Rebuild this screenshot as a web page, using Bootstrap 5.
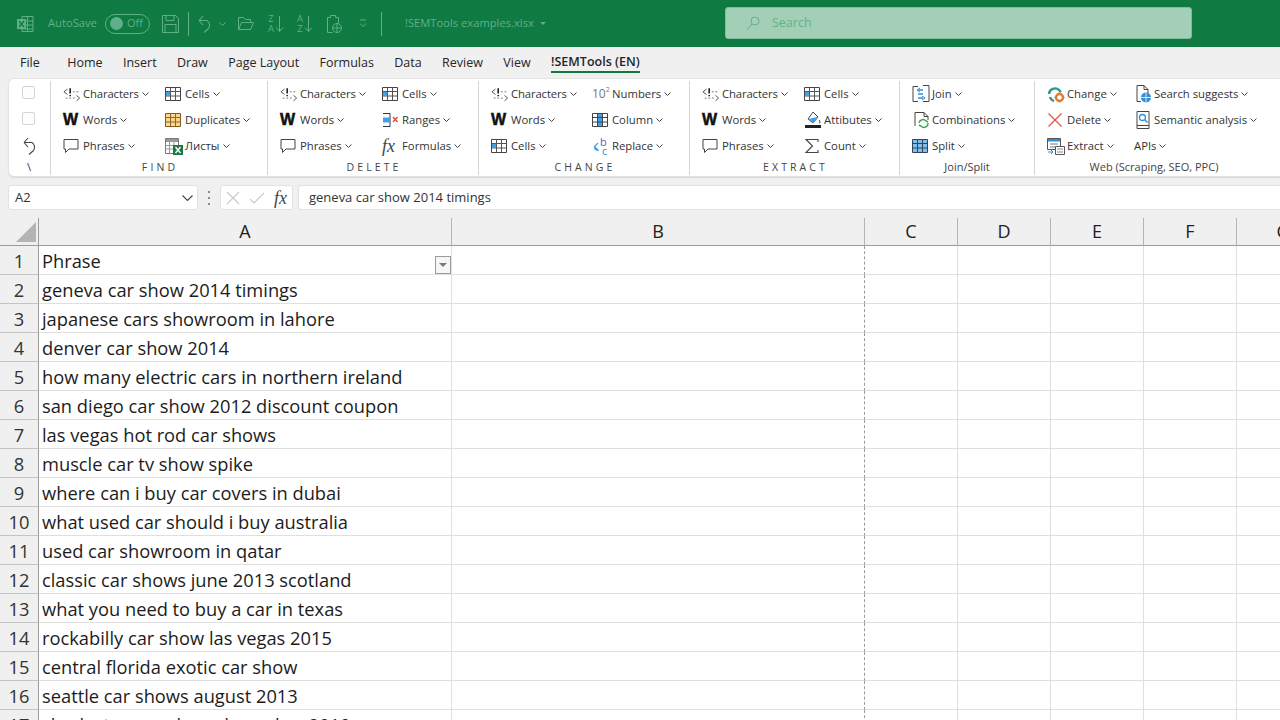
<!DOCTYPE html>
<html lang="en">
<head>
<meta charset="utf-8">
<title>!SEMTools examples.xlsx</title>
<link href="https://cdn.jsdelivr.net/npm/bootstrap@5.3.0/dist/css/bootstrap.min.css" rel="stylesheet">
<style>
html,body{height:720px;overflow:hidden;background:#fff;}
body{font-family:"Open Sans","Noto Sans",sans-serif;color:#222;}
.tbar{height:47px;background:#107a43;color:#5fb088;font-size:11.2px;}
.tb-ic{display:block;flex:none;}
.tb-auto{width:50px;margin-left:14px;white-space:nowrap;}
.tog{width:45px;height:20px;border:1px solid #5fb088;border-radius:10px;margin:0 12px 0 7px;padding:0 4px;font-size:11px;flex:none;}
.tog-dot{width:13px;height:13px;border-radius:50%;background:#5fb088;flex:none;}
.tb-sep{width:1px;height:24px;background:#5fb088;flex:none;}
.sort{width:17px;height:20px;flex:none;font-size:9.5px;line-height:10px;color:#5fb088;}
.sort-l{width:8px;text-align:center;}
.srch{width:467px;height:32px;margin-left:auto;margin-right:88px;margin-top:-1px;background:#a2cfb5;border:1px solid #7fbc9b;border-radius:3px;color:#6aaf8b;font-size:12.5px;padding-left:20px;}
.tabs{height:31px;background:#f0f0f0;font-size:12.5px;color:#262626;padding-left:20px;gap:20.4px;flex-wrap:nowrap;}
.tabs .nav-link{padding:0;color:#262626;line-height:31px;height:27px;white-space:nowrap;}
.tabs .first-tab{margin-right:7px;}
.tabs .nav-link.on{font-weight:600;border-bottom:2px solid #107a43;line-height:30px;height:26px;}
.rb-wrap{background:#f0f0f0;height:107px;padding-left:8px;}
.ribbon{height:99px;background:#fff;border:1px solid #e3e3e3;border-right:0;border-radius:6px 0 0 6px;box-shadow:0 1px 1px #d8d8d8;font-size:11.3px;color:#333;padding-top:2px;}
.grp{height:94px;border-right:1px solid #d6d6d6;flex:none;position:relative;}
.g0{width:42px;padding-left:12px;} .g1{width:217px;padding-left:12px;} .g2{width:211px;padding-left:12px;} .g3{width:211px;padding-left:12px;}
.g4{width:210px;padding-left:12px;} .g5{width:135px;padding-left:12px;} .g6{width:240px;padding-left:12px;border-right:0;}
.rcol{flex:none;}
.ritem{height:26px;white-space:nowrap;line-height:1;}
.ri{width:20px;flex:none;display:flex;align-items:center;}
.ri svg{display:block;}
.cv{margin-left:3px;flex:none;}
.tight{letter-spacing:-.12px;}
.w-ic{font-family:"Liberation Sans",sans-serif;font-weight:700;font-size:16px;color:#111;-webkit-text-stroke:.5px #111;}
.fx-ic{font-family:"Liberation Serif",serif;font-style:italic;font-size:18px;color:#444;}
.ten-ic{font-size:12px;color:#777;white-space:nowrap;}
.ten-ic sup{font-size:7px;top:-.6em;}
.glabel{position:absolute;left:2px;right:0;top:79px;text-align:center;font-size:11px;line-height:14px;color:#444;white-space:nowrap;}
.g5 .glabel{left:0;}
.g6 .glabel{left:-2px;}
.spaced{letter-spacing:3.1px;font-size:10.5px;}
.chk{width:13px;height:13px;border:1px solid #d5d5d5;border-radius:2px;background:#fdfdfd;margin-bottom:3px;}
.g0 .ritem{margin-left:1px;}
.undo-ic{color:#444;margin-left:1px;}
.slash{font-size:11px;line-height:12px;margin-left:6px;margin-top:2px;}
.fbar{background:#f0f0f0;height:33px;padding-left:8px;font-size:13px;color:#333;}
.fbox{height:25px;background:#fff;border:1px solid #e2e2e2;border-radius:3px;padding-top:1px;}
.namebox{width:190px;padding:1px 4px 0 6px;}
.dots{width:22px;height:25px;color:#888;}
.dots i{display:block;width:2px;height:2px;background:#8a8a8a;margin:2px 0;}
.fxbox{width:73px;padding:0 5px 0 5px;}
.fbox-in{margin-left:5px;flex:1;padding-left:10px;border-right:0;border-radius:3px 0 0 3px;}
.sheet{display:grid;grid-template-columns:39px 413px 413px 93px 93px 93px 93px 93px;grid-auto-rows:29px;width:1330px;}
.chd{height:28px;background:#f0f0f0;border-right:1px solid #b5b5b5;border-bottom:1px solid #9b9b9b;font-size:18px;color:#222;line-height:1;padding-bottom:2px;}
.corner{border-right:1px solid #9b9b9b;position:relative;}
.sheet-head{grid-auto-rows:28px;}
.corner-tri{left:16px;top:4px;}
.rhd{background:#f0f0f0;border-right:1px solid #9b9b9b;border-bottom:1px solid #c4c4c4;font-size:18.3px;color:#333;padding-top:1px;}
.cel{border-right:1px solid #dfdfdf;border-bottom:1px solid #dfdfdf;font-size:18.3px;color:#1c1c1c;padding:1px 0 0 3px;white-space:nowrap;overflow:hidden;}
.brk{border-right:1px dashed #9a9a9a;}
.flt{width:16px;height:18px;border:1px solid #9b9b9b;background:#f6f6f6;flex:none;margin-top:9px;}
.flt::after{content:"";border:4px solid transparent;border-top:4px solid #777;border-bottom:0;}
.rows{overflow:hidden;height:474px;}
</style>
</head>
<body>
<svg width="0" height="0" class="position-absolute">
<defs>
<symbol id="chars" viewBox="0 0 20 16"><path d="M5 2 1 5l4 3" fill="none" stroke="#555" stroke-width="1.1"/><path d="M8 1v6M8 8.500v1.500" stroke="#222" stroke-width="1.800"/><path d="M11 5h2M15 5h2M3 12h2M7 12h2M11 12h2" stroke="#777" stroke-width="1.100"/><path d="M15 9l3.500 3-3.500 3" fill="none" stroke="#555" stroke-width="1.100"/></symbol>
<symbol id="bubble" viewBox="0 0 16 16"><path d="M1 1.500h14v9.500H6L2.500 14.500V11H1z" fill="#fff" stroke="#444"/></symbol>
<symbol id="tbl" viewBox="0 0 16 16"><path d="M.5 1.500h15v13H.5z" fill="#fff" stroke="#444"/><path d="M1 5h4.500v4.500H1z" fill="#41a0e6"/><path d="M5.500 1.500v13M10.500 1.500v13M.5 5.500h15M.5 10h15" stroke="#555" fill="none"/></symbol>
<symbol id="dup" viewBox="0 0 16 16"><path d="M.5 1.500h15v13H.5z" fill="#fbd68b" stroke="#7a5c20"/><path d="M5.500 1.500v13M10.500 1.500v13M.5 5.500h15M.5 10h15" stroke="#8a6a2a" fill="none"/></symbol>
<symbol id="col" viewBox="0 0 16 16"><path d="M.5 1.500h15v13H.5z" fill="#fff" stroke="#444"/><path d="M5.500 2h5v12h-5z" fill="#41a0e6"/><path d="M5.500 1.500v13M10.500 1.500v13M.5 5.500h15M.5 10h15" stroke="#444" fill="none"/></symbol>
<symbol id="split" viewBox="0 0 16 16"><path d="M.5 1.500h15v13H.5z" fill="#7dc0f0" stroke="#345"/><path d="M5.500 1.500v13M10.500 1.500v13M.5 5.500h15M.5 10h15" stroke="#345" fill="none"/></symbol>
<symbol id="sheets" viewBox="0 0 18 18"><path d="M.5 1.500h13v15H.5z" fill="#fff" stroke="#777"/><path d="M1 2h12v3H1z" fill="#9a9a9a"/><path d="M.5 8.500h13M.5 12h13M4.500 5v11M9 5v11" stroke="#999" fill="none"/><path d="M8 8h10v10H8z" fill="#1b7a43"/><path d="M10.500 10l5 6M15.500 10l-5 6" stroke="#fff" stroke-width="1.400"/></symbol>
<symbol id="ranges" viewBox="0 0 18 16"><path d="M1 1.500h7v13H1" fill="none" stroke="#333"/><path d="M1 5.500h7v5H1z" fill="#41a0e6"/><path d="M11 5l4.500 5M15.500 5 11 10" stroke="#e03c31" stroke-width="1.200"/></symbol>
<symbol id="repl" viewBox="0 0 18 18"><path d="M6 6 2.500 9.500 6 13M2.500 9.500c0 3 2 4 4.500 4" fill="none" stroke="#41a0e6" stroke-width="1.200"/><text x="8" y="9" font-size="11" fill="#7a4fb5" font-family="Open Sans">b</text><text x="10" y="18" font-size="11" fill="#2f8fd8" font-family="Open Sans">c</text></symbol>
<symbol id="fill" viewBox="0 0 18 18"><path d="M9 1l5 5-5 6-5-4z" fill="#fff" stroke="#444"/><path d="M4 8l5 4 5-6z" fill="#41a0e6"/><path d="M15 9c1.500 2 1.500 3 0 3" stroke="#444" fill="none"/><path d="M1 14h16v3H1z" fill="#222"/></symbol>
<symbol id="sigma" viewBox="0 0 16 16"><path d="M14 4V1.500H2L8.500 8 2 14.500h12V12" fill="none" stroke="#444" stroke-width="1.100"/></symbol>
<symbol id="join" viewBox="0 0 18 18"><path d="M6 1.500H1v15h5M11 .5h6v16h-6" fill="none" stroke="#444"/><path d="M6 5h5M6 9h5M6 13h5" stroke="#2f8fd8" stroke-width="1.500"/><path d="M8 3l-3 2 3 2M10 11l3 2-3 2" fill="none" stroke="#2f8fd8"/></symbol>
<symbol id="comb" viewBox="0 0 18 18"><path d="M3 10V1.500h9l4 4V9" fill="none" stroke="#444"/><path d="M12 1.500v4h4M3 10v5" fill="none" stroke="#444"/><path d="M7 12a4 4 0 0 1 7-2l2 1" fill="none" stroke="#3aa655" stroke-width="1.500"/><path d="M16 12a4 4 0 0 1-7 3l-2-1" fill="none" stroke="#3aa655" stroke-width="1.500"/></symbol>
<symbol id="chg" viewBox="0 0 18 18"><path d="M2 9a6 6 0 0 1 10-4l2 2" fill="none" stroke="#2b9a8a" stroke-width="2.400"/><path d="M3 12a6 6 0 0 0 4 4" fill="none" stroke="#2b9a8a" stroke-width="2.400"/><circle cx="12.500" cy="12.500" r="3.500" fill="none" stroke="#e27b2a" stroke-width="2.400"/><path d="M12.500 7.500v2M12.500 15.500v2M7.500 12.500h2M15.500 12.500h2" stroke="#e27b2a" stroke-width="1.600"/></symbol>
<symbol id="cross" viewBox="0 0 16 16"><path d="M1.500 1.500l13 13M14.500 1.500l-13 13" stroke="#e0524a" stroke-width="1.200"/></symbol>
<symbol id="extract" viewBox="0 0 18 18"><path d="M.5 1.500h13v11H.5z" fill="#fff" stroke="#555"/><path d="M1 2h12v2.500H1z" fill="#2f8fd8"/><path d="M3 7h8M3 10h8" stroke="#777"/><path d="M8.500 9.500h9v8h-9z" fill="#fff" stroke="#555"/><path d="M10 12h6M10 15h6" stroke="#888"/><path d="M1 15h5M4 13l2 2-2 2" stroke="#2f8fd8" fill="none"/></symbol>
<symbol id="pageglobe" viewBox="0 0 18 18"><path d="M3 16.500V.5h7l4 4v4" fill="none" stroke="#444"/><path d="M10 .5v4h4M3 16.500h4" fill="none" stroke="#444"/><circle cx="12" cy="12.500" r="5" fill="#2f8fd8"/><path d="M7 12.500h10M12 7.500v10" stroke="#fff" stroke-width=".8"/></symbol>
<symbol id="book" viewBox="0 0 18 18"><path d="M3 .5h12v17H3z" fill="#fff" stroke="#444"/><path d="M3 14.500h12" stroke="#444"/><circle cx="8.500" cy="6.500" r="3" fill="none" stroke="#2f8fd8" stroke-width="1.300"/><path d="M11 9l2.500 2.500" stroke="#2f8fd8" stroke-width="1.400"/></symbol>
<symbol id="chev" viewBox="0 0 7 4"><path d="M.5.500 3.500 3.500 6.500.5" fill="none" stroke="#444"/></symbol>
<symbol id="undo" viewBox="0 0 16 18"><path d="M1 5.500h8a5.500 5.500 0 0 1 1 8.500l-4 3.500M1 5.500 5 1M1 5.500 5 10" fill="none" stroke="currentColor" stroke-width="1.100"/></symbol>
</defs>
</svg>

<header class="tbar d-flex align-items-center">
  <svg class="tb-ic ms-3" width="18" height="18" viewBox="0 0 18 18"><path d="M6 1.500h11v15H6z" fill="none" stroke="#5fb088"/><path d="M6 6h11M6 10h11M6 14h11M11.500 2v14" stroke="#5fb088"/><path d="M1 4h9v10H1z" fill="#5fb088"/><path d="M3 6l5 6M8 6l-5 6" stroke="#107a43" stroke-width="1.300"/></svg>
  <span class="tb-auto">AutoSave</span>
  <span class="tog d-flex align-items-center gap-1"><span class="tog-dot"></span>Off</span>
  <svg class="tb-ic" width="17" height="18" viewBox="0 0 17 18"><path d="M.5.500h13l3 3v14H.5z" fill="none" stroke="#5fb088"/><path d="M4 .5v5h8v-5M3 17.500V9.500h11v8" fill="none" stroke="#5fb088"/></svg>
  <span class="tb-sep" style="margin:0 9px"></span>
  <svg class="tb-ic" width="16" height="18" style="color:#5fb088"><use href="#undo"/></svg>
  <svg class="tb-ic" style="margin:0 12px 0 5px" width="7" height="4"><path d="M.5.500 3.500 3.500 6.500.5" fill="none" stroke="#5fb088"/></svg>
  <svg class="tb-ic" width="16" height="13" viewBox="0 0 16 13"><path d="M.5 12.500V.5h5l2 2h5v3M.5 12.500h12l3-7h-12z" fill="none" stroke="#5fb088"/></svg>
  <span class="sort d-flex align-items-center" style="margin-left:13px"><span class="sort-l">Z<br>A</span><svg class="tb-ic" width="9" height="18" viewBox="0 0 9 18"><path d="M4.500 1v15M1 12.500l3.500 4 3.500-4" fill="none" stroke="#5fb088"/></svg></span>
  <span class="sort d-flex align-items-center" style="margin-left:12px"><span class="sort-l">A<br>Z</span><svg class="tb-ic" width="9" height="18" viewBox="0 0 9 18"><path d="M4.500 1v15M1 12.500l3.500 4 3.500-4" fill="none" stroke="#5fb088"/></svg></span>
  <svg class="tb-ic" style="margin-left:14px" width="15" height="20" viewBox="0 0 15 20"><path d="M.5 18.500V3.500h3v-2h5v2h3v6M.5 18.500h5" fill="none" stroke="#5fb088"/><circle cx="10" cy="14" r="4.500" fill="none" stroke="#5fb088"/><path d="M5.500 14h9M10 9.500v9" stroke="#5fb088"/></svg>
  <svg class="tb-ic" style="margin-left:17px" width="8" height="9" viewBox="0 0 8 9"><path d="M1 1h6M1 4.500l3 3 3-3" fill="none" stroke="#5fb088"/></svg>
  <span class="tb-sep" style="margin-left:14px"></span>
  <span style="margin-left:23px">!SEMTools examples.xlsx</span>
  <svg class="tb-ic" style="margin-left:6px" width="6" height="3" viewBox="0 0 6 3"><path d="M0 0h6L3 3z" fill="#5fb088"/></svg>
  <div class="srch d-flex align-items-center">
    <svg class="tb-ic" width="14" height="15" viewBox="0 0 14 15"><circle cx="9" cy="5" r="4" fill="none" stroke="#6aaf8b"/><path d="M6 8 1 14" stroke="#6aaf8b"/></svg>
    <span style="margin-left:12px;padding-top:1px">Search</span>
  </div>
</header>

<ul class="nav tabs">
  <li class="nav-item first-tab"><a class="nav-link" href="#">File</a></li>
  <li class="nav-item"><a class="nav-link" href="#">Home</a></li>
  <li class="nav-item"><a class="nav-link" href="#">Insert</a></li>
  <li class="nav-item"><a class="nav-link" href="#">Draw</a></li>
  <li class="nav-item"><a class="nav-link" href="#">Page Layout</a></li>
  <li class="nav-item"><a class="nav-link" href="#">Formulas</a></li>
  <li class="nav-item"><a class="nav-link" href="#">Data</a></li>
  <li class="nav-item"><a class="nav-link" href="#">Review</a></li>
  <li class="nav-item"><a class="nav-link" href="#">View</a></li>
  <li class="nav-item"><a class="nav-link on" href="#">!SEMTools (EN)</a></li>
</ul>

<div class="rb-wrap">
<div class="ribbon d-flex">
  <section class="grp g0 rcol">
    <div class="ritem d-flex align-items-center"><span class="chk"></span></div>
    <div class="ritem d-flex align-items-center"><span class="chk"></span></div>
    <div class="ritem d-flex align-items-center"><svg class="undo-ic" width="16" height="18"><use href="#undo"/></svg></div>
    <div class="slash">\</div>
  </section>

  <section class="grp g1 d-flex">
    <div class="rcol" style="width:102px">
      <div class="ritem d-flex align-items-center"><span class="ri"><svg width="18" height="15"><use href="#chars"/></svg></span><span class="tight">Characters</span><svg class="cv" width="7" height="4"><use href="#chev"/></svg></div>
      <div class="ritem d-flex align-items-center"><span class="ri w-ic">W</span>Words<svg class="cv" width="7" height="4"><use href="#chev"/></svg></div>
      <div class="ritem d-flex align-items-center"><span class="ri"><svg width="16" height="16"><use href="#bubble"/></svg></span>Phrases<svg class="cv" width="7" height="4"><use href="#chev"/></svg></div>
    </div>
    <div class="rcol">
      <div class="ritem d-flex align-items-center"><span class="ri"><svg width="16" height="16"><use href="#tbl"/></svg></span>Cells<svg class="cv" width="7" height="4"><use href="#chev"/></svg></div>
      <div class="ritem d-flex align-items-center"><span class="ri"><svg width="16" height="16"><use href="#dup"/></svg></span>Duplicates<svg class="cv" width="7" height="4"><use href="#chev"/></svg></div>
      <div class="ritem d-flex align-items-center"><span class="ri"><svg width="18" height="18"><use href="#sheets"/></svg></span>Листы<svg class="cv" width="7" height="4"><use href="#chev"/></svg></div>
    </div>
    <div class="glabel spaced">FIND</div>
  </section>

  <section class="grp g2 d-flex">
    <div class="rcol" style="width:102px">
      <div class="ritem d-flex align-items-center"><span class="ri"><svg width="18" height="15"><use href="#chars"/></svg></span><span class="tight">Characters</span><svg class="cv" width="7" height="4"><use href="#chev"/></svg></div>
      <div class="ritem d-flex align-items-center"><span class="ri w-ic">W</span>Words<svg class="cv" width="7" height="4"><use href="#chev"/></svg></div>
      <div class="ritem d-flex align-items-center"><span class="ri"><svg width="16" height="16"><use href="#bubble"/></svg></span>Phrases<svg class="cv" width="7" height="4"><use href="#chev"/></svg></div>
    </div>
    <div class="rcol">
      <div class="ritem d-flex align-items-center"><span class="ri"><svg width="16" height="16"><use href="#tbl"/></svg></span>Cells<svg class="cv" width="7" height="4"><use href="#chev"/></svg></div>
      <div class="ritem d-flex align-items-center"><span class="ri"><svg width="18" height="16"><use href="#ranges"/></svg></span>Ranges<svg class="cv" width="7" height="4"><use href="#chev"/></svg></div>
      <div class="ritem d-flex align-items-center"><span class="ri fx-ic">fx</span>Formulas<svg class="cv" width="7" height="4"><use href="#chev"/></svg></div>
    </div>
    <div class="glabel spaced">DELETE</div>
  </section>

  <section class="grp g3 d-flex">
    <div class="rcol" style="width:101px">
      <div class="ritem d-flex align-items-center"><span class="ri"><svg width="18" height="15"><use href="#chars"/></svg></span><span class="tight">Characters</span><svg class="cv" width="7" height="4"><use href="#chev"/></svg></div>
      <div class="ritem d-flex align-items-center"><span class="ri w-ic">W</span>Words<svg class="cv" width="7" height="4"><use href="#chev"/></svg></div>
      <div class="ritem d-flex align-items-center"><span class="ri"><svg width="16" height="16"><use href="#tbl"/></svg></span>Cells<svg class="cv" width="7" height="4"><use href="#chev"/></svg></div>
    </div>
    <div class="rcol">
      <div class="ritem d-flex align-items-center"><span class="ri ten-ic">10<sup>2</sup></span>Numbers<svg class="cv" width="7" height="4"><use href="#chev"/></svg></div>
      <div class="ritem d-flex align-items-center"><span class="ri"><svg width="16" height="16"><use href="#col"/></svg></span>Column<svg class="cv" width="7" height="4"><use href="#chev"/></svg></div>
      <div class="ritem d-flex align-items-center"><span class="ri"><svg width="18" height="18"><use href="#repl"/></svg></span>Replace<svg class="cv" width="7" height="4"><use href="#chev"/></svg></div>
    </div>
    <div class="glabel spaced">CHANGE</div>
  </section>

  <section class="grp g4 d-flex">
    <div class="rcol" style="width:102px">
      <div class="ritem d-flex align-items-center"><span class="ri"><svg width="18" height="15"><use href="#chars"/></svg></span><span class="tight">Characters</span><svg class="cv" width="7" height="4"><use href="#chev"/></svg></div>
      <div class="ritem d-flex align-items-center"><span class="ri w-ic">W</span>Words<svg class="cv" width="7" height="4"><use href="#chev"/></svg></div>
      <div class="ritem d-flex align-items-center"><span class="ri"><svg width="16" height="16"><use href="#bubble"/></svg></span>Phrases<svg class="cv" width="7" height="4"><use href="#chev"/></svg></div>
    </div>
    <div class="rcol">
      <div class="ritem d-flex align-items-center"><span class="ri"><svg width="16" height="16"><use href="#tbl"/></svg></span>Cells<svg class="cv" width="7" height="4"><use href="#chev"/></svg></div>
      <div class="ritem d-flex align-items-center"><span class="ri"><svg width="18" height="18"><use href="#fill"/></svg></span>Attibutes<svg class="cv" width="7" height="4"><use href="#chev"/></svg></div>
      <div class="ritem d-flex align-items-center"><span class="ri"><svg width="16" height="16"><use href="#sigma"/></svg></span>Count<svg class="cv" width="7" height="4"><use href="#chev"/></svg></div>
    </div>
    <div class="glabel spaced">EXTRACT</div>
  </section>

  <section class="grp g5 rcol">
    <div class="ritem d-flex align-items-center"><span class="ri"><svg width="18" height="18"><use href="#join"/></svg></span>Join<svg class="cv" width="7" height="4"><use href="#chev"/></svg></div>
    <div class="ritem d-flex align-items-center"><span class="ri"><svg width="18" height="18"><use href="#comb"/></svg></span>Combinations<svg class="cv" width="7" height="4"><use href="#chev"/></svg></div>
    <div class="ritem d-flex align-items-center"><span class="ri"><svg width="16" height="16"><use href="#split"/></svg></span>Split<svg class="cv" width="7" height="4"><use href="#chev"/></svg></div>
    <div class="glabel">Join/Split</div>
  </section>

  <section class="grp g6 d-flex">
    <div class="rcol" style="width:87px">
      <div class="ritem d-flex align-items-center"><span class="ri"><svg width="18" height="18"><use href="#chg"/></svg></span>Change<svg class="cv" width="7" height="4"><use href="#chev"/></svg></div>
      <div class="ritem d-flex align-items-center"><span class="ri"><svg width="16" height="16"><use href="#cross"/></svg></span>Delete<svg class="cv" width="7" height="4"><use href="#chev"/></svg></div>
      <div class="ritem d-flex align-items-center"><span class="ri"><svg width="18" height="18"><use href="#extract"/></svg></span>Extract<svg class="cv" width="7" height="4"><use href="#chev"/></svg></div>
    </div>
    <div class="rcol">
      <div class="ritem d-flex align-items-center"><span class="ri"><svg width="18" height="18"><use href="#pageglobe"/></svg></span>Search suggests<svg class="cv" width="7" height="4"><use href="#chev"/></svg></div>
      <div class="ritem d-flex align-items-center"><span class="ri"><svg width="18" height="18"><use href="#book"/></svg></span>Semantic analysis<svg class="cv" width="7" height="4"><use href="#chev"/></svg></div>
      <div class="ritem d-flex align-items-center">APIs<svg class="cv" width="7" height="4"><use href="#chev"/></svg></div>
    </div>
    <div class="glabel">Web (Scraping, SEO, PPC)</div>
  </section>
</div>
</div>

<div class="fbar d-flex align-items-start">
  <div class="fbox namebox d-flex align-items-center justify-content-between">A2<svg width="11" height="6" viewBox="0 0 11 6"><path d="M.5.500 5.500 5.500 10.500.5" fill="none" stroke="#444" stroke-width="1.100"/></svg></div>
  <div class="dots d-flex flex-column align-items-center justify-content-center"><i></i><i></i><i></i></div>
  <div class="fbox fxbox d-flex align-items-center justify-content-between">
    <svg width="14" height="14" viewBox="0 0 14 14"><path d="M1 1l12 12M13 1 1 13" stroke="#c9c9c9" stroke-width="1.100"/></svg>
    <svg width="16" height="12" viewBox="0 0 16 12"><path d="M1 7l4 4L15 1" fill="none" stroke="#c9c9c9" stroke-width="1.100"/></svg>
    <span class="fx-ic lh-1">fx</span>
  </div>
  <div class="fbox fbox-in d-flex align-items-center">geneva car show 2014 timings</div>
</div>

<div class="sheet sheet-head">
  <div class="chd corner"><svg class="position-absolute corner-tri" width="20" height="20" viewBox="0 0 20 20"><path d="M20 0v20H0z" fill="#b4b4b4"/></svg></div>
  <div class="chd d-flex align-items-center justify-content-center">A</div>
  <div class="chd d-flex align-items-center justify-content-center">B</div>
  <div class="chd d-flex align-items-center justify-content-center">C</div>
  <div class="chd d-flex align-items-center justify-content-center">D</div>
  <div class="chd d-flex align-items-center justify-content-center">E</div>
  <div class="chd d-flex align-items-center justify-content-center">F</div>
  <div class="chd d-flex align-items-center justify-content-center">G</div>
</div>
<div class="rows">
<div class="sheet">
  <div class="rhd d-flex align-items-center justify-content-center">1</div><div class="cel d-flex align-items-center justify-content-between">Phrase<span class="flt d-flex align-items-center justify-content-center"></span></div><div class="cel brk"></div><div class="cel"></div><div class="cel"></div><div class="cel"></div><div class="cel"></div><div class="cel"></div>
  <div class="rhd d-flex align-items-center justify-content-center">2</div><div class="cel d-flex align-items-center">geneva car show 2014 timings</div><div class="cel brk"></div><div class="cel"></div><div class="cel"></div><div class="cel"></div><div class="cel"></div><div class="cel"></div>
  <div class="rhd d-flex align-items-center justify-content-center">3</div><div class="cel d-flex align-items-center">japanese cars showroom in lahore</div><div class="cel brk"></div><div class="cel"></div><div class="cel"></div><div class="cel"></div><div class="cel"></div><div class="cel"></div>
  <div class="rhd d-flex align-items-center justify-content-center">4</div><div class="cel d-flex align-items-center">denver car show 2014</div><div class="cel brk"></div><div class="cel"></div><div class="cel"></div><div class="cel"></div><div class="cel"></div><div class="cel"></div>
  <div class="rhd d-flex align-items-center justify-content-center">5</div><div class="cel d-flex align-items-center">how many electric cars in northern ireland</div><div class="cel brk"></div><div class="cel"></div><div class="cel"></div><div class="cel"></div><div class="cel"></div><div class="cel"></div>
  <div class="rhd d-flex align-items-center justify-content-center">6</div><div class="cel d-flex align-items-center">san diego car show 2012 discount coupon</div><div class="cel brk"></div><div class="cel"></div><div class="cel"></div><div class="cel"></div><div class="cel"></div><div class="cel"></div>
  <div class="rhd d-flex align-items-center justify-content-center">7</div><div class="cel d-flex align-items-center">las vegas hot rod car shows</div><div class="cel brk"></div><div class="cel"></div><div class="cel"></div><div class="cel"></div><div class="cel"></div><div class="cel"></div>
  <div class="rhd d-flex align-items-center justify-content-center">8</div><div class="cel d-flex align-items-center">muscle car tv show spike</div><div class="cel brk"></div><div class="cel"></div><div class="cel"></div><div class="cel"></div><div class="cel"></div><div class="cel"></div>
  <div class="rhd d-flex align-items-center justify-content-center">9</div><div class="cel d-flex align-items-center">where can i buy car covers in dubai</div><div class="cel brk"></div><div class="cel"></div><div class="cel"></div><div class="cel"></div><div class="cel"></div><div class="cel"></div>
  <div class="rhd d-flex align-items-center justify-content-center">10</div><div class="cel d-flex align-items-center">what used car should i buy australia</div><div class="cel brk"></div><div class="cel"></div><div class="cel"></div><div class="cel"></div><div class="cel"></div><div class="cel"></div>
  <div class="rhd d-flex align-items-center justify-content-center">11</div><div class="cel d-flex align-items-center">used car showroom in qatar</div><div class="cel brk"></div><div class="cel"></div><div class="cel"></div><div class="cel"></div><div class="cel"></div><div class="cel"></div>
  <div class="rhd d-flex align-items-center justify-content-center">12</div><div class="cel d-flex align-items-center">classic car shows june 2013 scotland</div><div class="cel brk"></div><div class="cel"></div><div class="cel"></div><div class="cel"></div><div class="cel"></div><div class="cel"></div>
  <div class="rhd d-flex align-items-center justify-content-center">13</div><div class="cel d-flex align-items-center">what you need to buy a car in texas</div><div class="cel brk"></div><div class="cel"></div><div class="cel"></div><div class="cel"></div><div class="cel"></div><div class="cel"></div>
  <div class="rhd d-flex align-items-center justify-content-center">14</div><div class="cel d-flex align-items-center">rockabilly car show las vegas 2015</div><div class="cel brk"></div><div class="cel"></div><div class="cel"></div><div class="cel"></div><div class="cel"></div><div class="cel"></div>
  <div class="rhd d-flex align-items-center justify-content-center">15</div><div class="cel d-flex align-items-center">central florida exotic car show</div><div class="cel brk"></div><div class="cel"></div><div class="cel"></div><div class="cel"></div><div class="cel"></div><div class="cel"></div>
  <div class="rhd d-flex align-items-center justify-content-center">16</div><div class="cel d-flex align-items-center">seattle car shows august 2013</div><div class="cel brk"></div><div class="cel"></div><div class="cel"></div><div class="cel"></div><div class="cel"></div><div class="cel"></div>
  <div class="rhd d-flex align-items-center justify-content-center">17</div><div class="cel d-flex align-items-center">charleston car show december 2010</div><div class="cel brk"></div><div class="cel"></div><div class="cel"></div><div class="cel"></div><div class="cel"></div><div class="cel"></div>
</div>
</div>
</body>
</html>
